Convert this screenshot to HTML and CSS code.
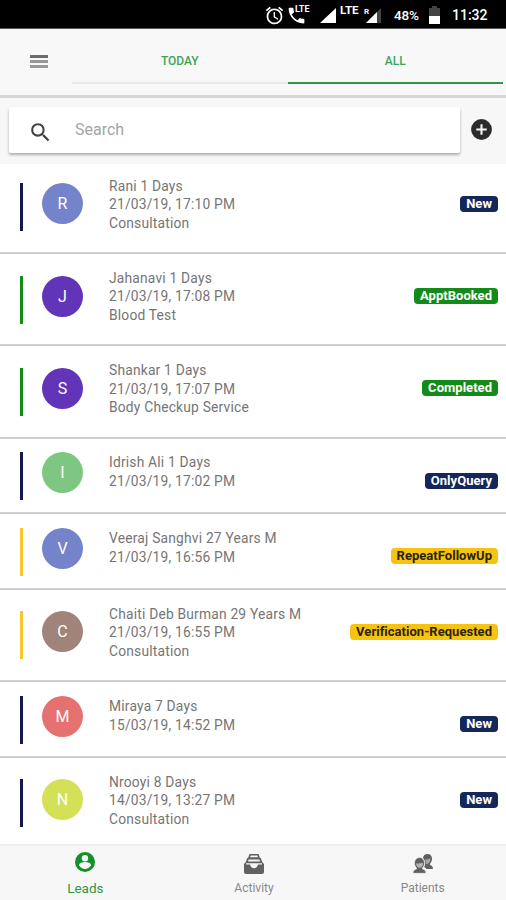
FILE: index.html
```html
<!DOCTYPE html>
<html lang="en">
<head>
<meta charset="utf-8">
<title>Leads</title>
<link rel="stylesheet" href="styles.css">
</head>
<body>
<div class="app">
  <div class="status">
    <svg class="alarm" viewBox="0 0 24 24"><path d="M22 5.72l-4.6-3.86-1.29 1.53 4.6 3.86L22 5.72zM7.88 3.39L6.6 1.86 2 5.71l1.29 1.53 4.59-3.85zM12.5 8H11v6l4.75 2.85.75-1.23-4-2.37V8zM12 4c-4.97 0-9 4.03-9 9s4.02 9 9 9a9 9 0 0 0 0-18zm0 16c-3.87 0-7-3.13-7-7s3.13-7 7-7 7 3.13 7 7-3.13 7-7 7z"/></svg>
    <svg class="call" viewBox="0 0 24 24"><path d="M6.6 10.8c1.4 2.8 3.8 5.1 6.6 6.6l2.2-2.2c.3-.3.7-.4 1-.2 1.1.4 2.3.6 3.6.6.6 0 1 .4 1 1V20c0 .6-.4 1-1 1C10.600 21 3 13.400 3 4c0-.6.400-1 1-1h3.500c.6 0 1 .4 1 1 0 1.300.2 2.500.6 3.600.1.300 0 .7-.2 1z"/></svg>
    <span class="lte lte-call">LTE</span>
    <svg class="signal" viewBox="0 0 16 15"><path d="M16 0v15H0z"/></svg>
    <span class="lte lte-net">LTE</span>
    <span class="roam">R</span>
    <svg class="signal2" viewBox="0 0 15 15"><path fill="#444" d="M15 0v15H0z"/><path d="M11 4v11H0z"/></svg>
    <span class="percent">48%</span>
    <svg class="battery" viewBox="0 0 11 18"><path fill="#444" d="M3 0h5v2h3v16H0V2h3z"/><path d="M0 10h11v8H0z"/></svg>
    <span class="clock">11:32</span>
  </div>
  <header class="toolbar">
    <div class="menu"><i></i><i></i><i></i></div>
    <nav class="tabs"><a class="tab">TODAY</a><a class="tab active">ALL</a></nav>
  </header>
  <section class="searchbar">
    <div class="search">
      <svg viewBox="0 0 24 24"><path d="M15.5 14h-.79l-.28-.27A6.47 6.47 0 0 0 16 9.500 6.500 6.500 0 1 0 9.500 16c1.610 0 3.090-.59 4.230-1.570l.27.28v.79l5 4.990L20.490 19l-4.990-5zm-6 0a4.500 4.500 0 1 1 0-9 4.500 4.500 0 0 1 0 9z"/></svg>
      <span>Search</span>
    </div>
    <svg class="add" viewBox="0 0 24 24"><path d="M12 2a10 10 0 1 0 0 20 10 10 0 0 0 0-20zm5 11h-4v4h-2v-4H7v-2h4V7h2v4h4v2z"/></svg>
  </section>
  <main class="list">
    <article class="row navy">
      <div class="mark"><i class="bar"></i><b class="avatar indigo">R</b></div>
      <div class="info"><p>Rani 1 Days</p><p>21/03/19, 17:10 PM</p><p>Consultation</p></div><span class="badge">New</span>
    </article>
    <article class="row green">
      <div class="mark"><i class="bar"></i><b class="avatar purple">J</b></div>
      <div class="info"><p>Jahanavi 1 Days</p><p>21/03/19, 17:08 PM</p><p>Blood Test</p></div><span class="badge">ApptBooked</span>
    </article>
    <article class="row green">
      <div class="mark"><i class="bar"></i><b class="avatar purple">S</b></div>
      <div class="info"><p>Shankar 1 Days</p><p>21/03/19, 17:07 PM</p><p>Body Checkup Service</p></div><span class="badge">Completed</span>
    </article>
    <article class="row navy short">
      <div class="mark"><i class="bar"></i><b class="avatar mint">I</b></div>
      <div class="info"><p>Idrish Ali 1 Days</p><p>21/03/19, 17:02 PM</p></div><span class="badge">OnlyQuery</span>
    </article>
    <article class="row yellow short">
      <div class="mark"><i class="bar"></i><b class="avatar indigo">V</b></div>
      <div class="info"><p>Veeraj Sanghvi 27 Years M</p><p>21/03/19, 16:56 PM</p></div><span class="badge">RepeatFollowUp</span>
    </article>
    <article class="row yellow">
      <div class="mark"><i class="bar"></i><b class="avatar brown">C</b></div>
      <div class="info"><p>Chaiti Deb Burman 29 Years M</p><p>21/03/19, 16:55 PM</p><p>Consultation</p></div><span class="badge">Verification-Requested</span>
    </article>
    <article class="row navy short">
      <div class="mark"><i class="bar"></i><b class="avatar red">M</b></div>
      <div class="info"><p>Miraya 7 Days</p><p>15/03/19, 14:52 PM</p></div><span class="badge">New</span>
    </article>
    <article class="row navy">
      <div class="mark"><i class="bar"></i><b class="avatar lime">N</b></div>
      <div class="info"><p>Nrooyi 8 Days</p><p>14/03/19, 13:27 PM</p><p>Consultation</p></div><span class="badge">New</span>
    </article>
  </main>
  <footer class="bottom">
    <a class="item current">
      <svg viewBox="0 0 20 20"><circle cx="10" cy="10" r="10"/><circle class="cut" cx="10" cy="6.300" r="3.200"/><path class="cut" d="M4 13.200c0-2.300 3.500-3.200 6-3.200s6 .9 6 3.200c-1.200 2.400-3.500 3.700-6 3.700s-4.800-1.300-6-3.700z"/></svg>
      <span>Leads</span>
    </a>
    <a class="item">
      <svg viewBox="0 0 20 20"><path d="M5.500 0h9L16 4H4zM6.700 1.500L6 3.200h8l-.7-1.700z" fill-rule="evenodd"/><path d="M3.200 4h13.600L18.500 9h-17zm1.400 1.400L3.900 7.500h12.200l-.7-2.100z" fill-rule="evenodd"/><path d="M2 8h16l2 2v8a2 2 0 0 1-2 2H2a2 2 0 0 1-2-2v-8z"/><path class="cut" d="M2 9.300h16v1.200h-4c-.5 2.300-2 3.800-4 3.800s-3.500-1.500-4-3.800H2z"/></svg>
      <span>Activity</span>
    </a>
    <a class="item">
      <svg viewBox="0 0 20 20"><path d="M10 4c.3-2.500 2-4 4.400-4C17.300 0 19 2 19 4.700c0 2-.8 3.900-2 5v1.200c1.800.6 3 1.400 3 4.100h-6.500c-.6-1-1.600-1.600-2.500-2 1.800-2 1.500-6.500-1-9z"/><path fill="#aaa" d="M12 5.500c2 .2 4-.4 5-1.500.6 2-.2 4.800-2 5.800h-2.500c.5-1.500.3-3-.5-4.300z"/><path stroke="#f7f7f7" stroke-width=".6" d="M1.500 9c0-3 2-5.500 5-5.500s5 2.500 5 5.500c0 2.200-1 4-2 5v1c2 .6 3.500 1.500 3.500 4.300H0C0 16.500 1.500 15.600 3.500 15v-1c-1-1-2-2.800-2-5z"/><path fill="#b4b4b4" d="M3 9.500c2.500.3 5-.2 6-.8l1.200.8c-.2 2.500-1.500 4.300-3.500 4.300S3.200 12 3 9.500z"/></svg>
      <span>Patients</span>
    </a>
  </footer>
</div>
</body>
</html>
```
FILE: styles.css
```css
* { box-sizing: border-box; }
body { margin: 0; background: #fff; font-family: Roboto, "Liberation Sans", sans-serif; }
svg { display: block; fill: currentColor; flex: none; }
.app { width: 506px; height: 900px; display: flex; flex-direction: column; overflow: hidden; }

.status { height: 29px; flex: none; background: #000; border-bottom: 1px solid #555; color: #fff; display: flex; align-items: center; padding: 2px 17px 0 264px; font-weight: 500; white-space: nowrap; }
.status > * { flex: none; }
.alarm { width: 21px; height: 21px; }
.call { width: 21px; height: 21px; margin-left: 1px; }
.lte { font-weight: 700; line-height: 1; }
.lte-call { font-size: 9px; margin: -11px 0 0 -12px; width: 17px; }
.signal { width: 16px; height: 15px; margin-left: 8px; }
.lte-net { font-size: 11.500px; width: 21px; margin: -8px 0 0 4px; }
.roam { font-size: 8px; font-weight: 700; width: 6px; margin: -8px 0 0 3px; }
.signal2 { width: 15px; height: 15px; margin-left: -4px; }
.percent { font-size: 13.500px; font-weight: 500; width: 29px; margin-left: 13px; letter-spacing: -.2px; }
.battery { width: 11px; height: 18px; margin-left: 6px; }
.clock { font-size: 14px; margin-left: 12px; }

.toolbar { height: 69px; flex: none; background: #f8f8f8; border-bottom: 3px solid #d6d6d6; display: flex; }
.menu { width: 72px; padding: 26px 0 0 30px; display: flex; flex-direction: column; gap: 2px; }
.menu i { width: 18px; height: 3px; background: #999; }
.menu i:first-child { background: #6c6c6c; }
.tabs { display: flex; width: 431px; height: 55px; }
.tab { flex: 1; height: 55px; border-bottom: 2px solid #e9e9e9; color: #3fa45b; font-size: 12px; font-weight: 500; line-height: 64px; text-align: center; }
.active { border-color: #319449; }

.searchbar { height: 66px; flex: none; background: #f7f7f7; display: flex; padding: 9px 0 0 9px; }
.search { width: 451px; height: 46px; background: #fff; border-radius: 2px; box-shadow: 0 2px 3px rgba(0,0,0,.3); display: flex; align-items: center; color: #a5a5a5; font-size: 16px; }
.search svg { width: 25px; height: 25px; margin: 5px 22px 0 19px; color: #424242; }
.search span { margin-top: -1px; }
.add { width: 25px; height: 25px; margin: 10px 0 0 9px; color: #2c2c2c; }

.list { flex: none; height: 680px; }
.row { height: 92.300px; display: flex; background: #fff; border-bottom: 2px solid #cdcdcd; }
.row:first-child { height: 90px; }
.row:first-child .mark { padding-top: 19px; }
.row:first-child .info { padding-top: 12.500px; }
.row:first-child .badge { margin-top: 32px; }
.row:last-child { border-bottom: 0; }
.short { height: 75.700px; }
.mark { width: 109px; display: flex; padding: 21.500px 0 0 19.500px; }
.short .mark { padding-top: 13.500px; }
.bar { width: 3.500px; height: 48px; margin-right: 19px; }
.avatar { width: 41px; height: 41px; border-radius: 50%; color: #fff; font-size: 16px; font-weight: 400; line-height: 41px; text-align: center; }
.info { flex: 1; padding-top: 14.800px; white-space: nowrap; }
.info p { margin: 0; height: 18.700px; line-height: 18.700px; font-size: 13.800px; color: #757575; letter-spacing: .2px; }
.badge { height: 16px; margin: 34px 8px 0 0; padding: 0 6px; border-radius: 4px; font-size: 13px; line-height: 16px; font-weight: 700; letter-spacing: .03px; color: #fff; }
.navy .bar { background: #17174f; }
.navy .badge { background: #14275a; }
.green .bar, .green .badge { background: #148a18; }
.yellow .bar { background: #f7c52c; }
.yellow .badge { background: #f5c413; color: #2a2305; }
.indigo { background: #7583ca; }
.purple { background: #6234b8; }
.mint { background: #7ec783; }
.brown { background: #a08379; }
.red { background: #e57171; }
.lime { background: #d4e157; }

.bottom { height: 56px; flex: none; background: #f7f7f7; border-top: 2px solid #eee; display: flex; padding-left: 1px; margin-right: -1px; }
.item { flex: 1; display: flex; flex-direction: column; align-items: center; color: #888; font-size: 12px; padding-top: 8px; }
.item svg { width: 20px; height: 20px; color: #616161; }
.item span { line-height: 16px; margin-top: 6px; }
.current { color: #2f9646; font-size: 13.500px; padding-top: 6px; }
.current svg { color: #119127; }
.current span { margin-top: 8px; }
.cut { fill: #f7f7f7; }
```
